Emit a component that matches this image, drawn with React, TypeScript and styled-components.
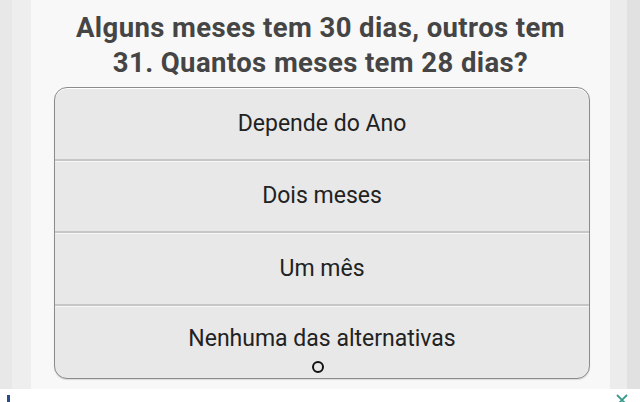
import React from "react";
import styled, { createGlobalStyle } from "styled-components";

const Global = createGlobalStyle`
  html, body { margin: 0; padding: 0; background: #ffffff; }
  body { font-family: Roboto, "Liberation Sans", sans-serif; }
`;

const Screen = styled.div`
  width: 640px;
  height: 402px;
  display: grid;
  grid-template-rows: 389px 13px;
  overflow: hidden;
`;

const Columns = styled.div`
  display: flex;
  height: 389px;
`;

const Strip = styled.div<{ $w: number; $c: string }>`
  width: ${(p) => p.$w}px;
  flex: none;
  background: ${(p) => p.$c};
`;

const Content = styled.main`
  flex: 1;
  background: #f8f8f8;
  display: flex;
  flex-direction: column;
  align-items: center;
  padding-top: 10px;
  box-sizing: border-box;
`;

const Title = styled.h1`
  margin: 0;
  font-family: Roboto, "Liberation Sans", sans-serif;
  font-weight: 700;
  font-size: 27.5px;
  line-height: 35px;
  color: #454545;
  text-align: center;
  letter-spacing: 0.4px;
  white-space: nowrap;
`;

const Options = styled.div`
  margin-top: 7px;
  margin-left: 3px;
  width: 536px;
  height: 292px;
  box-sizing: border-box;
  border: 1.5px solid #8c8c8c;
  border-radius: 13px;
  background: #e8e8e8;
  box-shadow: inset 0 1px 0 #ffffff, 0 1px 1px rgba(0, 0, 0, 0.12);
  display: grid;
  grid-template-rows: repeat(4, 1fr);
  overflow: hidden;
`;

const Option = styled.div<{ $last?: boolean }>`
  position: relative;
  display: flex;
  align-items: center;
  justify-content: center;
  font-size: 23px;
  color: #222222;
  border-bottom: ${(p) => (p.$last ? "none" : "2px solid #c6c6c6")};
  box-shadow: ${(p) => (p.$last ? "none" : "0 1px 0 #f6f6f6")};
  padding-bottom: ${(p) => (p.$last ? "6px" : "0")};
`;

const Cursor = styled.span`
  position: absolute;
  left: 257px;
  bottom: 5px;
  width: 8px;
  height: 8px;
  border: 2.5px solid #111;
  border-radius: 50%;
`;

const Footer = styled.div`
  position: relative;
  background: #ffffff;
`;

const Mark = styled.span`
  position: absolute;
  left: 7px;
  top: 6px;
  width: 2.5px;
  height: 8px;
  background: #2a4c8c;
`;

const CloseIcon = styled.svg`
  position: absolute;
  left: 616px;
  top: 5px;
`;

const options = ["Depende do Ano", "Dois meses", "Um mês", "Nenhuma das alternativas"];

export default function App() {
  return (
    <>
      <Global />
      <Screen>
        <Columns>
          <Strip $w={12} $c="#e8e8e8" />
          <Strip $w={19} $c="#eeeeee" />
          <Content>
            <Title>
              Alguns meses tem 30 dias, outros tem
              <br />
              31. Quantos meses tem 28 dias?
            </Title>
            <Options>
              {options.map((o, i) => (
                <Option key={o} $last={i === options.length - 1}>
                  {o}
                  {i === options.length - 1 && <Cursor />}
                </Option>
              ))}
            </Options>
          </Content>
          <Strip $w={17} $c="#ececec" />
          <Strip $w={13} $c="#e1e1e1" />
        </Columns>
        <Footer>
          <Mark />
          <CloseIcon width="12" height="12" viewBox="0 0 12 12">
            <path d="M1 1 L11 11 M11 1 L1 11" stroke="#3a9a8a" strokeWidth="1.8" fill="none" />
          </CloseIcon>
        </Footer>
      </Screen>
    </>
  );
}
